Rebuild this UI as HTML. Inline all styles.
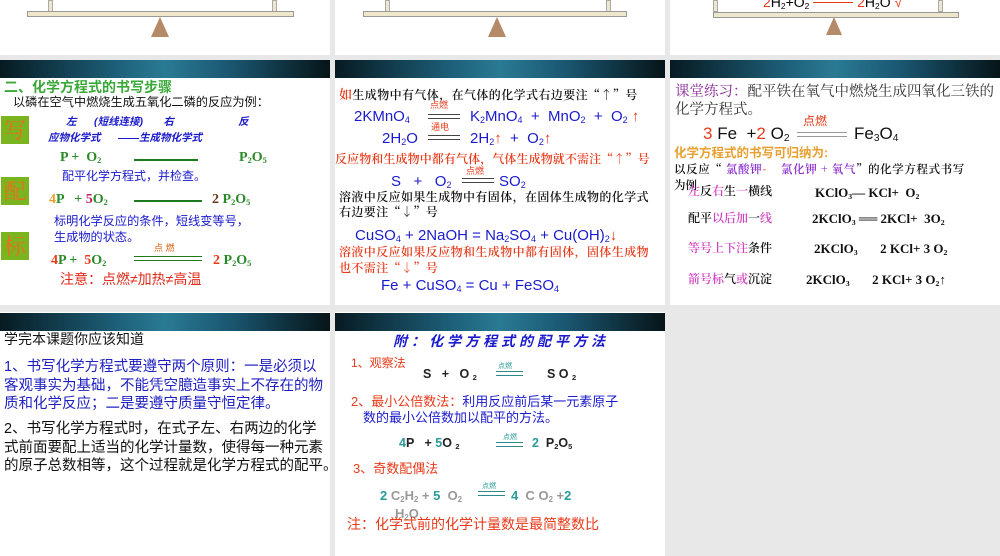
<!DOCTYPE html>
<html><head><meta charset="utf-8"><style>
*{margin:0;padding:0;box-sizing:border-box}
body{width:1000px;height:556px;background:#e8e8e8;position:relative;overflow:hidden;font-family:"Liberation Sans","Noto Sans CJK SC",sans-serif}
.s{position:absolute;background:#fff;overflow:hidden}
.h{position:absolute;left:0;right:0;height:18px;background:linear-gradient(90deg,#071a22 0%,#1d5f78 35%,#2a7a94 50%,#1a5670 70%,#061418 100%)}
.t{position:absolute;white-space:nowrap;line-height:1}
.b{color:#1a1acc}.r{color:#e83a1a}.g{color:#2a9a2a}.k{color:#111}.m{color:#d040c0}.o{color:#e8a030}.c{color:#2a9a9a}
sub{font-size:60%;vertical-align:-2px}
.ser{font-family:"Liberation Serif","Noto Serif CJK SC",serif;font-weight:bold}
.sc{font-family:"Noto Serif CJK SC",serif;font-weight:600}
.box{position:absolute;width:28px;height:28px;background:#7ab520;color:#e8701a;font-size:22px;text-align:center;line-height:28px;font-family:"Noto Serif CJK SC",serif}
.ln{position:absolute;height:2px;background:#1f7a1f}
.eq{position:absolute;height:5px;border-top:1.5px solid #555;border-bottom:1.5px solid #555}
</style></head><body>
<!-- row 0 partial -->
<div class="s" style="left:0;top:0;width:330px;height:55px">
 <div style="position:absolute;left:48px;top:0;width:5px;height:12px;background:#efe7cc;border:1px solid #aaa"></div>
 <div style="position:absolute;left:272px;top:0;width:5px;height:12px;background:#efe7cc;border:1px solid #aaa"></div>
 <div style="position:absolute;left:27px;top:11px;width:267px;height:6px;background:#efe7cc;border:1px solid #999"></div>
 <div style="position:absolute;left:151px;top:17px;width:0;height:0;border-left:9px solid transparent;border-right:9px solid transparent;border-bottom:20px solid #b48a68"></div>
</div>
<div class="s" style="left:335px;top:0;width:330px;height:55px">
 <div style="position:absolute;left:50px;top:0;width:5px;height:12px;background:#efe7cc;border:1px solid #aaa"></div>
 <div style="position:absolute;left:271px;top:0;width:5px;height:12px;background:#efe7cc;border:1px solid #aaa"></div>
 <div style="position:absolute;left:28px;top:11px;width:264px;height:6px;background:#efe7cc;border:1px solid #999"></div>
 <div style="position:absolute;left:153px;top:17px;width:0;height:0;border-left:9px solid transparent;border-right:9px solid transparent;border-bottom:20px solid #b48a68"></div>
</div>
<div class="s" style="left:670px;top:0;width:330px;height:55px">
 <div style="position:absolute;left:43px;top:0;width:5px;height:12px;background:#efe7cc;border:1px solid #aaa"></div>
 <div style="position:absolute;left:268px;top:0;width:5px;height:12px;background:#efe7cc;border:1px solid #aaa"></div>
 <div class="t" style="left:93px;top:-5px;font-size:14px"><span class="r">2</span>H<sub>2</sub>+O<sub>2</sub> <span style="display:inline-block;width:40px;border-top:1.5px solid #e83a1a;vertical-align:4px"></span> <span class="r">2</span>H<sub>2</sub>O <span class="r">√</span></div>
 <div style="position:absolute;left:43px;top:12px;width:246px;height:6px;background:#efe7cc;border:1px solid #999"></div>
 <div style="position:absolute;left:156px;top:17px;width:0;height:0;border-left:8px solid transparent;border-right:8px solid transparent;border-bottom:18px solid #b48a68"></div>
</div>

<!-- row1 col1 -->
<div class="s" style="left:0;top:60px;width:330px;height:245px">
 <div class="h" style="top:0"></div>
 <div class="t g" style="left:4px;top:20px;font-size:14px;color:#3aa83a;font-weight:bold">二、化学方程式的书写步骤</div>
 <div class="t k" style="left:13px;top:36px;font-size:12.2px">以磷在空气中燃烧生成五氧化二磷的反应为例：</div>
 <div class="box" style="left:1px;top:56px">写</div>
 <div class="t b" style="left:66px;top:57px;font-size:10.5px;font-style:italic;font-weight:bold">左&nbsp;&nbsp;&nbsp;&nbsp;&nbsp;&nbsp;(短线连接)&nbsp;&nbsp;&nbsp;&nbsp;&nbsp;&nbsp;&nbsp;右&nbsp;&nbsp;&nbsp;&nbsp;&nbsp;&nbsp;&nbsp;&nbsp;&nbsp;&nbsp;&nbsp;&nbsp;&nbsp;&nbsp;&nbsp;&nbsp;&nbsp;&nbsp;&nbsp;&nbsp;&nbsp;&nbsp;反</div>
 <div class="t b" style="left:48px;top:73px;font-size:10.5px;font-style:italic;font-weight:bold">应物化学式&nbsp;&nbsp;&nbsp;&nbsp;&nbsp;&nbsp;——生成物化学式</div>
 <div class="t g ser" style="left:60px;top:91px;font-size:14px;color:#2a8a2a">P + &nbsp;O<sub>2</sub></div>
 <div class="ln" style="left:134px;top:99px;width:64px"></div>
 <div class="t g ser" style="left:239px;top:91px;font-size:14px;color:#2a8a2a">P<sub>2</sub>O<sub>5</sub></div>
 <div class="t b" style="left:62px;top:110px;font-size:12px">配平化学方程式，并检查。</div>
 <div class="box" style="left:1px;top:117px">配</div>
 <div class="t ser" style="left:49px;top:133px;font-size:14px;color:#2a8a2a"><span class="o">4</span>P &nbsp;&nbsp;+ <span style="color:#c02060">5</span>O<sub>2</sub></div>
 <div class="ln" style="left:134px;top:140px;width:68px"></div>
 <div class="t ser" style="left:212px;top:133px;font-size:14px;color:#2a8a2a"><span style="color:#6a3a1a">2</span> P<sub>2</sub>O<sub>5</sub></div>
 <div class="t b" style="left:54px;top:155px;font-size:12.2px">标明化学反应的条件，短线变等号，</div>
 <div class="t b" style="left:54px;top:171px;font-size:12.2px">生成物的状态。</div>
 <div class="box" style="left:1px;top:172px">标</div>
 <div class="t r" style="left:154px;top:184px;font-size:9px;color:#e06010">点&nbsp;燃</div>
 <div class="eq" style="left:134px;top:196px;width:68px;border-color:#1f7a1f"></div>
 <div class="t ser" style="left:51px;top:194px;font-size:14px;color:#2a8a2a"><span class="r">4</span>P + &nbsp;<span class="r">5</span>O<sub>2</sub></div>
 <div class="t ser" style="left:213px;top:194px;font-size:14px;color:#2a8a2a"><span class="r">2</span> P<sub>2</sub>O<sub>5</sub></div>
 <div class="t r" style="left:60px;top:212px;font-size:14px;color:#e02a1a">注意：点燃≠加热≠高温</div>
</div>

<!-- row1 col2 -->
<div class="s" style="left:335px;top:60px;width:330px;height:245px">
 <div class="h" style="top:0"></div>
 <div class="t k sc" style="left:4px;top:27px;font-size:12px;letter-spacing:0.4px"><span class="r" style="font-size:13px">如</span>生成物中有气体，在气体的化学式右边要注“↑”号</div>
 <div class="t r" style="left:95px;top:41px;font-size:9px">点燃</div>
 <div class="t b" style="left:19px;top:49px;font-size:15px">2KMnO<sub>4</sub></div>
 <div class="eq" style="left:93px;top:54px;width:32px;border-color:#444"></div>
 <div class="t b" style="left:135px;top:49px;font-size:15px">K<sub>2</sub>MnO<sub>4</sub> &nbsp;+ &nbsp;MnO<sub>2</sub> &nbsp;+ &nbsp;O<sub>2</sub> <span class="r">↑</span></div>
 <div class="t r" style="left:96px;top:63px;font-size:9px">通电</div>
 <div class="t b" style="left:47px;top:71px;font-size:15px">2H<sub>2</sub>O</div>
 <div class="eq" style="left:93px;top:75px;width:32px;border-color:#444"></div>
 <div class="t b" style="left:135px;top:71px;font-size:15px">2H<sub>2</sub><span class="r">↑</span> &nbsp;+ &nbsp;O<sub>2</sub><span class="r">↑</span></div>
 <div class="t r sc" style="left:0px;top:93px;font-size:12px;letter-spacing:0.1px">反应物和生成物中都有气体，气体生成物就不需注“↑”号</div>
 <div class="t r" style="left:131px;top:107px;font-size:9px">点燃</div>
 <div class="t b" style="left:56px;top:114px;font-size:15px">S &nbsp;&nbsp;+ &nbsp;&nbsp;O<sub>2</sub></div>
 <div class="eq" style="left:127px;top:118px;width:32px;border-color:#444"></div>
 <div class="t b" style="left:164px;top:114px;font-size:15px">SO<sub>2</sub></div>
 <div class="t k sc" style="left:4px;top:131px;font-size:12px;letter-spacing:0.4px">溶液中反应如果生成物中有固体，在固体生成物的化学式</div>
 <div class="t k sc" style="left:4px;top:146px;font-size:12px;letter-spacing:0.4px">右边要注“↓”号</div>
 <div class="t b" style="left:20px;top:168px;font-size:15px">CuSO<sub>4</sub> + 2NaOH = Na<sub>2</sub>SO<sub>4</sub> + Cu(OH)<sub>2</sub><span class="r">↓</span></div>
 <div class="t r sc" style="left:4px;top:186px;font-size:12px;letter-spacing:0.4px">溶液中反应如果反应物和生成物中都有固体，固体生成物</div>
 <div class="t r sc" style="left:4px;top:202px;font-size:12px;letter-spacing:0.4px">也不需注“↓”号</div>
 <div class="t b" style="left:46px;top:218px;font-size:15px">Fe + CuSO<sub>4</sub> = Cu + FeSO<sub>4</sub></div>
</div>

<!-- row1 col3 -->
<div class="s" style="left:670px;top:60px;width:330px;height:245px">
 <div class="h" style="top:0"></div>
 <div class="t" style="left:5px;top:24px;font-size:14.5px;color:#333;font-family:'Noto Serif CJK SC',serif"><span style="color:#8a2a9a">课堂练习：</span>配平铁在氧气中燃烧生成四氧化三铁的</div>
 <div class="t" style="left:5px;top:42px;font-size:14.5px;color:#333;font-family:'Noto Serif CJK SC',serif">化学方程式。</div>
 <div class="t r" style="left:133px;top:55px;font-size:12px">点燃</div>
 <div class="t k" style="left:33px;top:65px;font-size:17px"><span class="r">3</span> Fe &nbsp;+<span class="r">2</span> O<sub>2</sub></div>
 <div class="eq" style="left:127px;top:72px;width:50px;border-color:#999"></div>
 <div class="t k" style="left:184px;top:65px;font-size:17px">Fe<sub>3</sub>O<sub>4</sub></div>
 <div class="t o" style="left:4px;top:87px;font-size:12.5px;font-weight:bold">化学方程式的书写可归纳为:</div>
 <div class="t k sc" style="left:4px;top:104px;font-size:11.5px;letter-spacing:0.6px">以反应“ <span style="color:#8a2ad0">氯酸钾</span><span class="r">-</span> &nbsp;&nbsp;&nbsp;<span style="color:#8a2ad0">氯化钾 + 氧气</span>”的化学方程式书写</div>
 <div class="t k sc" style="left:4px;top:120px;font-size:11.5px">为例</div>
 <div class="t k sc" style="left:18px;top:125px;font-size:12px"><span class="m">左</span>反<span class="m">右</span>生<span class="m">一</span>横线</div>
 <div class="t k ser" style="left:145px;top:126px;font-size:13px">KClO<sub>3</sub>— KCl+ &nbsp;O<sub>2</sub></div>
 <div class="t k sc" style="left:18px;top:152px;font-size:12px">配平<span class="m">以后加</span>一<span class="m">线</span></div>
 <div class="t k ser" style="left:142px;top:152px;font-size:13px">2KClO<sub>3</sub> ══ 2KCl+ &nbsp;3O<sub>2</sub></div>
 <div class="t k sc" style="left:18px;top:182px;font-size:12px"><span class="m">等号上下注</span>条件</div>
 <div class="t k ser" style="left:144px;top:182px;font-size:13px">2KClO<sub>3</sub> <span style="display:inline-block;width:16px"></span> 2 KCl+ 3 O<sub>2</sub></div>
 <div class="t k sc" style="left:18px;top:213px;font-size:12px"><span class="m">箭号标</span>气<span class="m">或</span>沉淀</div>
 <div class="t k ser" style="left:136px;top:213px;font-size:13px">2KClO<sub>3</sub> <span style="display:inline-block;width:16px"></span> 2 KCl+ 3 O<sub>2</sub>↑</div>
</div>

<!-- row2 col1 -->
<div class="s" style="left:0;top:312px;width:330px;height:244px">
 <div class="h" style="top:1px"></div>
 <div class="t k" style="left:4px;top:20px;font-size:14px">学完本课题你应该知道</div>
 <div class="t" style="left:4px;top:46px;font-size:14.5px;line-height:18.5px;color:#2020c0">1、书写化学方程式要遵守两个原则：一是必须以<br>客观事实为基础，不能凭空臆造事实上不存在的物<br>质和化学反应；二是要遵守质量守恒定律。</div>
 <div class="t k" style="left:4px;top:108px;font-size:14.5px;line-height:18.5px">2、书写化学方程式时，在式子左、右两边的化学<br>式前面要配上适当的化学计量数，使得每一种元素<br>的原子总数相等，这个过程就是化学方程式的配平。</div>
</div>

<!-- row2 col2 -->
<div class="s" style="left:335px;top:312px;width:330px;height:244px">
 <div class="h" style="top:1px"></div>
 <div class="t b" style="left:58px;top:22px;font-size:14px;font-weight:bold;font-style:italic;letter-spacing:4px">附：化学方程式的配平方法</div>
 <div class="t r" style="left:16px;top:45px;font-size:12px">1、观察法</div>
 <div class="t k" style="left:88px;top:56px;font-size:12.5px;font-weight:bold;color:#222">S &nbsp;&nbsp;+ &nbsp;&nbsp;O <sub>2</sub></div>
 <div class="t c" style="left:163px;top:51px;font-size:7px">点燃</div>
 <div class="eq" style="left:161px;top:59px;width:27px;border-color:#2a8a8a"></div>
 <div class="t k" style="left:212px;top:56px;font-size:12.5px;font-weight:bold;color:#222">S O <sub>2</sub></div>
 <div class="t r" style="left:16px;top:83px;font-size:13px">2、<span>最小公倍数法：</span><span class="b">利用反应前后某一元素原子</span></div>
 <div class="t b" style="left:28px;top:99px;font-size:13px">数的最小公倍数加以配平的方法。</div>
 <div class="t k" style="left:64px;top:125px;font-size:12.5px;font-weight:bold;color:#222"><span class="c">4</span>P &nbsp;&nbsp;+ <span class="c">5</span>O <sub>2</sub></div>
 <div class="t c" style="left:168px;top:122px;font-size:7px">点燃</div>
 <div class="eq" style="left:161px;top:130px;width:27px;border-color:#2a8a8a"></div>
 <div class="t k" style="left:197px;top:125px;font-size:12.5px;font-weight:bold;color:#222"><span class="c">2</span> &nbsp;P<sub>2</sub>O<sub>5</sub></div>
 <div class="t r" style="left:18px;top:150px;font-size:13px">3、奇数配偶法</div>
 <div class="t" style="left:45px;top:177px;font-size:13px;font-weight:bold;color:#999"><span class="c">2</span> C<sub>2</sub>H<sub>2</sub> + <span class="c">5</span> &nbsp;O<sub>2</sub></div>
 <div class="t c" style="left:147px;top:171px;font-size:7px">点燃</div>
 <div class="eq" style="left:143px;top:179px;width:27px;border-color:#2a8a8a"></div>
 <div class="t" style="left:176px;top:177px;font-size:13px;font-weight:bold;color:#999"><span class="c">4</span> &nbsp;C O<sub>2</sub> +<span class="c">2</span></div>
 <div class="t" style="left:60px;top:195px;font-size:13px;font-weight:bold;color:#999">H<sub>2</sub>O</div>
 <div class="t r" style="left:12px;top:205px;font-size:14px">注：化学式前的化学计量数是最简整数比</div>
</div>
</body></html>
